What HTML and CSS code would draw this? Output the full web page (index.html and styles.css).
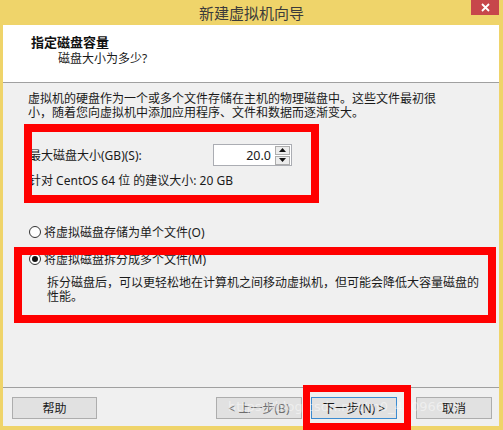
FILE: index.html
```html
<!DOCTYPE html>
<html>
<head>
<meta charset="utf-8">
<link rel="stylesheet" href="styles.css">
</head>
<body>
<div class="win">
  <div class="titlebar">
    <span class="title">新建虚拟机向导</span>
    <div class="close">
      <svg width="9" height="9" viewBox="0 0 9 9"><path d="M1 1 L8 8 M8 1 L1 8" stroke="#fff" stroke-width="1.8"/></svg>
    </div>
  </div>
  <div class="frame">
    <div class="header">
      <div class="h-title">指定磁盘容量</div>
      <div class="h-sub">磁盘大小为多少?</div>
    </div>
    <div class="main">
      <p class="para">虚拟机的硬盘作为一个或多个文件存储在主机的物理磁盘中。这些文件最初很<br>小，随着您向虚拟机中添加应用程序、文件和数据而逐渐变大。</p>
      <div class="field">
        <span class="label">最大磁盘大小(GB)(S):</span>
        <div class="spin">
          <span class="spin-val">20.0</span>
          <div class="spin-btns">
            <div class="sbtn"><svg width="7" height="4" viewBox="0 0 7 4"><path d="M3.5 0 L7 4 L0 4 Z" fill="#111"/></svg></div>
            <div class="sbtn"><svg width="7" height="4" viewBox="0 0 7 4"><path d="M0 0 L7 0 L3.5 4 Z" fill="#111"/></svg></div>
          </div>
        </div>
      </div>
      <div class="hint">针对 CentOS 64 位 的建议大小: 20 GB</div>
      <div class="radio r1"><span class="dot"></span><span>将虚拟磁盘存储为单个文件(O)</span></div>
      <div class="radio r2"><span class="dot on"></span><span>将虚拟磁盘拆分成多个文件(M)</span></div>
      <p class="desc">拆分磁盘后，可以更轻松地在计算机之间移动虚拟机，但可能会降低大容量磁盘的<br>性能。</p>
    </div>
    <div class="footer">
      <button class="btn help">帮助</button>
      <span class="spacer"></span>
      <button class="btn back">&lt; 上一步(B)</button>
      <button class="btn next">下一步(N) &gt;</button>
      <button class="btn cancel">取消</button>
    </div>
  </div>
  <div class="watermark">https://blog.csdn.net/m0_43096675</div>
  <div class="mark m1"></div>
  <div class="mark m2"></div>
  <div class="mark m3"></div>
</div>
</body>
</html>
```
FILE: styles.css
```css
* { box-sizing: border-box; }
html, body { margin: 0; padding: 0; }
body {
  width: 503px;
  height: 430px;
  overflow: hidden;
  background: #efd46a;
  font-family: "Noto Sans", "Noto Sans CJK SC", sans-serif;
  font-size: 12px;
  color: #1a1a1a;
}
.win { position: relative; width: 503px; height: 430px; }
.titlebar {
  position: relative;
  height: 25px;
  text-align: center;
}
.title {
  font-family: "Noto Sans CJK SC", sans-serif;
  font-size: 15px;
  line-height: 25px;
  color: #3b3b3b;
}
.close {
  position: absolute;
  top: 0;
  left: 471px;
  width: 28px;
  height: 15px;
  background: #c7474b;
  display: flex;
  align-items: center;
  justify-content: center;
}
.frame {
  margin-left: 3px;
  width: 496px;
  height: 401px;
  background: #f0f0f0;
  display: flex;
  flex-direction: column;
}
.header {
  height: 58px;
  background: #fff;
  border-bottom: 1px solid #a0a0a0;
  padding: 9px 0 0 28px;
}
.h-title {
  font-weight: bold;
  font-size: 13px;
  line-height: 17px;
  color: #111;
}
.h-sub {
  padding-left: 27px;
  line-height: 15px;
}
.main {
  flex: 1;
  padding-left: 25px;
}
.para {
  margin: 9px 0 0;
  line-height: 14px;
  white-space: nowrap;
}
.field {
  margin-top: 24px;
  margin-left: 1px;
  display: flex;
  align-items: center;
  height: 22px;
}
.label { width: 184px; }
.spin {
  width: 79px;
  height: 22px;
  background: #fff;
  border: 1px solid #abadb3;
  display: flex;
  align-items: center;
  justify-content: flex-end;
  padding-right: 1px;
}
.spin-val { font-size: 12.5px; margin-right: 4px; }
.spin-btns {
  display: flex;
  flex-direction: column;
  gap: 1px;
}
.sbtn {
  width: 15px;
  height: 9px;
  border: 1px solid #adadad;
  background: #ececec;
  display: flex;
  align-items: center;
  justify-content: center;
}
.hint {
  margin-top: 8px;
  margin-left: 1px;
  line-height: 14px;
}
.radio {
  margin-left: 1px;
  display: flex;
  align-items: center;
  height: 14px;
  gap: 3px;
}
.r1 { margin-top: 37px; }
.r2 { margin-top: 13px; }
.dot {
  width: 12px;
  height: 12px;
  border-radius: 50%;
  border: 1px solid #333;
  background: #fff;
  position: relative;
}
.dot.on::after {
  content: "";
  position: absolute;
  left: 2px;
  top: 2px;
  width: 6px;
  height: 6px;
  border-radius: 50%;
  background: #111;
}
.desc {
  margin: 10px 0 0;
  padding-left: 19px;
  line-height: 14px;
  white-space: nowrap;
}
.footer {
  height: 39px;
  border-top: 1px solid #a0a0a0;
  padding: 9px 7px 0 9px;
  display: flex;
  align-items: flex-start;
}
.spacer { flex: 1; }
.btn {
  height: 22px;
  width: 85px;
  border: 1px solid #adadad;
  background: #e1e1e1;
  font-family: "Noto Sans", "Noto Sans CJK SC", sans-serif;
  font-size: 12px;
  color: #1a1a1a;
  padding: 0;
}
.back { width: 86px; color: #6d6d6d; }
.next { width: 86px; margin-left: 9px; border-color: #3c8bd0; }
.cancel { width: 76px; margin-left: 19px; }
.watermark {
  position: absolute;
  left: 228px;
  top: 399px;
  font-family: "DejaVu Sans", sans-serif;
  font-size: 13px;
  color: rgba(255, 255, 255, 0.45);
  white-space: nowrap;
  pointer-events: none;
}
.mark {
  position: absolute;
  border: 8px solid #f00;
}
.m1 { left: 24px; top: 124px; width: 295px; height: 79px; }
.m2 { left: 14px; top: 247px; width: 482px; height: 76px; }
.m3 { left: 303px; top: 385px; width: 108px; height: 45px; border-width: 7px; }
```
